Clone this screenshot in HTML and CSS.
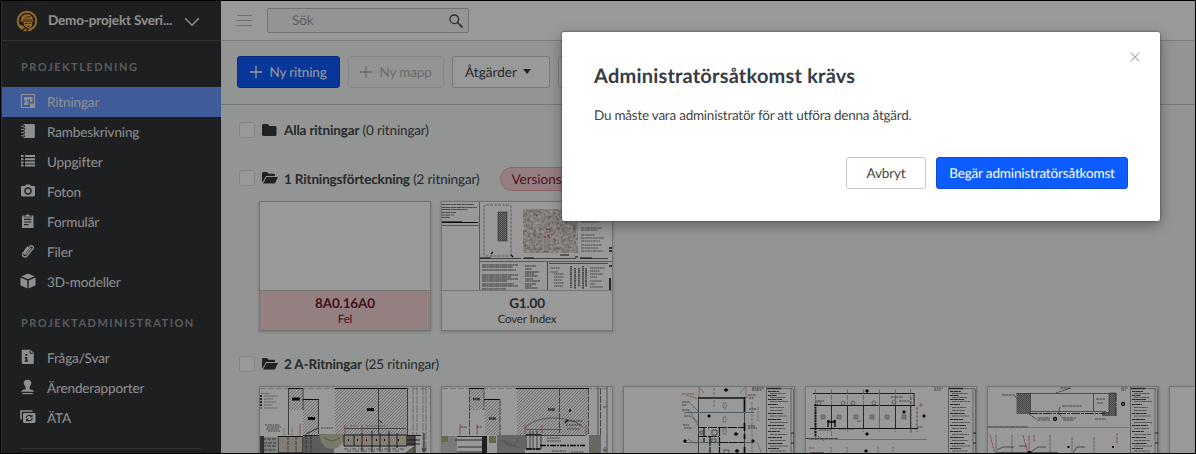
FILE: index.html
```html
<!DOCTYPE html>
<html lang="sv">
<head>
    <meta charset="UTF-8">
    <meta name="viewport" content="width=device-width, initial-scale=1.0">
    <title>Ritningar</title>
    <link rel="stylesheet" href="styles.css">
</head>
<body>
    <!-- Shared patterns and symbols for the drawings -->
    <svg class="defs" width="0" height="0">
        <defs>
            <pattern id="hatch" width="3" height="3" patternUnits="userSpaceOnUse">
                <path d="M-1 1L1 -1M0 3L3 0M2 4L4 2" stroke="#777" stroke-width=".5"/>
            </pattern>
            <pattern id="dense" width="2" height="2" patternUnits="userSpaceOnUse">
                <rect width="2" height="2" fill="#aaa"/><path d="M0 2L2 0" stroke="#555" stroke-width=".6"/>
            </pattern>
            <filter id="mapNoise" x="0" y="0" width="100%" height="100%">
                <feTurbulence type="fractalNoise" baseFrequency=".35" numOctaves="3" seed="4"/>
                <feColorMatrix values="1.2 .3 0 0 -.05  1.1 .3 0 0 -.06  1 .3 .1 0 -.1  0 0 0 0 1"/>
            </filter>
            <symbol id="legend" viewBox="0 0 28 68">
                <path d="M.5 0V68M25 2V68M27.5 2V68" stroke="#777" stroke-width=".7"/>
                <path d="M1 1.5H15" stroke="#111" stroke-width="1.4"/>
                <path d="M1 1.5H27" stroke="#666" stroke-width=".6"/>
                <g stroke="#444" fill="none">
                    <path d="M2 4.5H13M2 8.5H11M2 12.5H16M2 17.5H12M2 26.5H17M2 32.5H15M2 38.5H18M2 44.5H14M2 50.5H16M2 56.5H17M2 61.5H13M2 66.5H17" stroke-width="1.2" stroke-dasharray="3 .4 5 .5 2 .3"/>
                    <path d="M4 6.5H20M4 10.5H19M4 14.5H22M4 20.5H18M4 23.5H17M4 29H21M4 35.5H22M4 41.5H19M4 47.5H21M4 53.5H20M4 59H22M4 64H20" stroke-width="1" stroke-dasharray="4 .5 3 .4" opacity=".6"/>
                </g>
                <path d="M25 46H28M25 56H28" stroke="#333"/>
            </symbol>
        </defs>
    </svg>

    <div class="app">
        <aside class="sidebar">
            <div class="project">
                <svg class="project-logo" viewBox="0 0 22 22">
                    <circle cx="11" cy="11" r="9.300" fill="none" stroke="#fbb03b" stroke-width="2"/>
                    <path d="M5 10C5.200 6.300 7.600 4.300 11 4.300s5.800 2 6 5.700l1.200 1.600H4.200z" fill="#fbb03b"/>
                    <path d="M8.500 7.800L14.500 6.300M7 10H16.500" stroke="#323437" stroke-width=".9"/>
                    <path d="M7.500 12h8.500v3.500l-2 3-3-.500L8 15z" fill="#fbb03b"/>
                    <path d="M9 13.500h2.500M13 13.500h2M11 16.500h2.500" stroke="#323437" stroke-width="1.100"/>
                    <path d="M3.500 14.500l5 2 2 4.800-5-2z" fill="#fbb03b"/>
                    <path d="M5.500 21L9.500 17.500M10.500 22l1.500-3" stroke="#323437" stroke-width="1.300"/>
                </svg>
                <span class="project-name">Demo-projekt Sveri...</span>
                <svg class="project-arrow" viewBox="0 0 16 10"><path d="M1.200 1.200L8 8.200L14.800 1.200" fill="none" stroke="#e8e8e8" stroke-width="1.500"/></svg>
            </div>

            <h2 class="nav-title">PROJEKTLEDNING</h2>
            <ul class="nav">
                <li class="nav-item active">
                    <svg viewBox="0 0 16 16"><path d="M1.500 1.500h13v13h-13z" fill="none" stroke="currentColor" stroke-width="1.200"/><path d="M4 4h8.500v5H10V6.500H7V8h1.500v4H4V9.500h1.500V7.500H4z"/><path d="M10 10.500h4.500v4H10z"/></svg>
                    Ritningar
                </li>
                <li class="nav-item">
                    <svg viewBox="0 0 16 16"><path d="M3.500 1h10c.8 0 1.300.5 1.300 1.300v11.400c0 .8-.5 1.300-1.300 1.300h-10z"/><path d="M1 3.200h4M1 6.400h4M1 9.600h4M1 12.800h4" stroke="#323437" stroke-width="2.300"/><path d="M1 3.200h3.500M1 6.400h3.500M1 9.600h3.500M1 12.800h3.500" stroke="currentColor"/></svg>
                    Rambeskrivning
                </li>
                <li class="nav-item">
                    <svg viewBox="0 0 16 16"><path d="M1 2h2.500v2H1zM1 5.200h2.500v2H1zM1 8.400h2.500v2H1zM1 11.600h2.500v2H1zM5 2h10v2H5zM5 5.200h10v2H5zM5 8.400h10v2H5zM5 11.600h10v2H5z"/></svg>
                    Uppgifter
                </li>
                <li class="nav-item">
                    <svg viewBox="0 0 16 16"><path d="M5 3l1-1.500h4L11 3h2.800c.7 0 1.200.5 1.200 1.200v8.100c0 .7-.5 1.200-1.200 1.200H2.200c-.7 0-1.200-.5-1.200-1.200V4.200C1 3.500 1.500 3 2.200 3z"/><circle cx="8" cy="8" r="3" fill="none" stroke="#323437" stroke-width="1.400"/></svg>
                    Foton
                </li>
                <li class="nav-item">
                    <svg viewBox="0 0 16 16"><path d="M2 2.500h11.500V15H2z"/><path d="M4.200 4V2.200h1.700a2 2 0 0 1 3.700 0h1.700V4z" stroke="#323437" stroke-width=".7"/><path d="M4 6.400h7.500M4 9h7.500M4 11.600h4.500" stroke="#323437" stroke-width="1.100"/></svg>
                    Formulär
                </li>
                <li class="nav-item">
                    <svg viewBox="0 0 16 16"><path d="M10.800 5.400L6.200 10.800c-.9 1-2.300-.1-1.400-1.200l5.200-6.100c1.600-1.900 4.500.2 2.900 2.400l-5.700 6.900c-2.300 2.700-6.200-.1-4-3L7.600 4" fill="none" stroke="currentColor" stroke-width="1.350" stroke-linecap="round"/></svg>
                    Filer
                </li>
                <li class="nav-item">
                    <svg viewBox="0 0 16 16"><path d="M8 .4l6.800 2.800L8 6.200 1.200 3.200zM.5 4.500l6.800 3v8.100L.5 12.300zM15.500 4.500l-6.800 3v8.100l6.800-3.300z"/></svg>
                    3D-modeller
                </li>
            </ul>

            <h2 class="nav-title">PROJEKTADMINISTRATION</h2>
            <ul class="nav">
                <li class="nav-item">
                    <svg viewBox="0 0 16 16"><path d="M3 .8h7.500L13.800 4v9.700c0 .8-.5 1.300-1.300 1.300H3c-.8 0-1.300-.5-1.300-1.300V2.100C1.700 1.300 2.200.8 3 .8z"/><path d="M10 1.500v2.800h3" fill="none" stroke="#323437" stroke-width=".9"/><path d="M5.300 5h2v1.700h-2zM4.800 8h2.500v3.500H8v1.300H4.500v-1.300h1V9.200h-.7z" fill="#323437"/></svg>
                    Fråga/Svar
                </li>
                <li class="nav-item">
                    <svg viewBox="0 0 16 16"><path d="M7.500.7c3 0 4.300 1.900 3.700 4.100C10.800 6.400 9.500 7.500 9.500 10c0 .7 4.500.4 4.500 2.800H1.300C1.300 10.400 5.800 10.700 5.800 10c0-2.500-1.500-3.600-2-5.200C3.300 2.600 4.500.7 7.500.7z"/><path d="M2.300 14h10.500v1.200H2.300z"/></svg>
                    Ärenderapporter
                </li>
                <li class="nav-item">
                    <svg viewBox="0 0 16 16"><path d="M1 10.500V2h11.500" fill="none" stroke="currentColor" stroke-width="1.600"/><rect x="3" y="4" width="12.500" height="10" rx="1.400"/><path d="M6.200 9a3 3 0 0 1 5.200-1.800M12.200 9a3 3 0 0 1-5.200 1.800" fill="none" stroke="#323437" stroke-width="1.100"/><path d="M12.500 5.500v2.800H9.700zM6 12.500V9.700h2.800z" fill="#323437"/></svg>
                    ÄTA
                </li>
            </ul>
            <div class="nav-line"></div>
        </aside>

        <main class="main">
            <header class="topbar">
                <div class="menu-icon"><i></i><i></i><i></i></div>
                <div class="search">
                    <span>Sök</span>
                    <svg viewBox="0 0 16 16"><circle cx="6.300" cy="6.300" r="4.300" fill="none" stroke="#46494d" stroke-width="1.300"/><path d="M9.500 9.500L14.500 14.300" stroke="#46494d" stroke-width="1.700"/></svg>
                </div>
            </header>

            <div class="toolbar">
                <button class="btn primary new-drawing"><svg class="plus" viewBox="0 0 12 12"><path d="M6 0V12M0 6H12"/></svg>Ny ritning</button>
                <button class="btn disabled new-folder"><svg class="plus" viewBox="0 0 12 12"><path d="M6 0V12M0 6H12"/></svg>Ny mapp</button>
                <button class="btn actions">Åtgärder<i class="caret"></i></button>
                <button class="btn more"></button>
            </div>

            <div class="content">
                <div class="folder">
                    <span class="checkbox"></span>
                    <svg class="folder-icon" viewBox="0 0 16 14"><path d="M1.500 1h4.300l1.700 2H13c.9 0 1.500.6 1.500 1.500v7c0 .9-.6 1.500-1.500 1.500H1.500C.6 13 0 12.400 0 11.500v-9C0 1.600.6 1 1.500 1z"/></svg>
                    <span class="folder-name"><b>Alla ritningar</b> (0 ritningar)</span>
                </div>

                <div class="folder first">
                    <span class="checkbox"></span>
                    <svg class="folder-icon" viewBox="0 0 16 14"><path d="M0 11V2.500C0 1.600.6 1 1.500 1H5l1.500 1.700h5c.9 0 1.500.5 1.500 1.400v1H4L.8 10.700z"/><path d="M4.500 6H16l-3.200 6.500H1z"/></svg>
                    <span class="folder-name"><b>1 Ritningsförteckning</b> (2 ritningar)</span>
                    <span class="tag">Versionskonflikt</span>
                </div>
                <div class="cards">
                    <div class="card error">
                        <div class="thumb"></div>
                        <div class="card-text"><b>8A0.16A0</b><span>Fel</span></div>
                    </div>
                    <div class="card">
                        <svg class="thumb" viewBox="0 0 170 88">
                            <path d="M37.500 0V88M0 23.500H37M37 59.500H170" fill="none" stroke="#777" stroke-width=".8"/>
                            <g stroke="#555" stroke-width=".8" stroke-dasharray="3 .4 5 .5 2 .3">
                                <path d="M0 2.500H32M0 5.500H35M0 7.500H25M0 10.500H14M0 13H12M0 15.500H8"/>
                            </g>
                            <path d="M0 20.500H36" stroke="#111"/>
                            <path d="M0 19.500H20" stroke="#333" stroke-width=".7"/>
                            <rect x="42" y="3" width="27" height="51" rx="2" fill="none" stroke="#777" stroke-width=".7" stroke-dasharray="3 1"/>
                            <rect x="56" y="10" width="9" height="29" fill="url(#dense)" stroke="#555" stroke-width=".6"/>
                            <path d="M49 52l2-2M69 53l2 2" stroke="#111" stroke-width="1.300"/>
                            <path d="M38 56.500H79M81 56.500H134M138 56.500H166" stroke="#333" stroke-width=".7"/>
                            <path d="M38 56H49M82 56H92M118 53H127M133 55H136M138 56H150" stroke="#222" stroke-width="1.200"/>
                            <rect x="81" y="7" width="55" height="44" filter="url(#mapNoise)"/>
                            <path d="M81 20L136 14M98 7L107 51M119 7L126 51M81 39L136 43" stroke="#d2cec8" stroke-width="1.500" opacity=".45"/>
                            <path d="M104 28l3-1M108 27v3M105 33l3 3M107 32v2M103 34v2" stroke="#d44" fill="none"/>
                            <g stroke="#666" stroke-width=".8" stroke-dasharray="3 .5 2 .4">
                                <path d="M139 20H157M139 26H160M139 28H156M139 33H153M139 36H162M139 39H158M139 43H160M139 46H156M139 49H161"/>
                            </g>
                            <g stroke="#555" stroke-width=".9" stroke-dasharray="4 .3 2 .3 6 .4">
                                <path d="M40 63H76M40 65H71M40 68H74M40 73H76M40 75H69M40 77H76M40 79H65M40 82H72M40 84H76M40 87H64"/>
                                <path d="M83 64H94M83 67H90M83 70H97M83 72H92M83 74H96M83 77H91M83 79H98M83 82H94M83 84H90M83 86H96"/>
                            </g>
                            <path d="M105.500 60V88M107 61.500H166" stroke="#555" stroke-width=".8"/>
                            <g stroke="#666" stroke-width=".9" stroke-dasharray="1.500 .4">
                                <path d="M108 66H118M108 70H116M112 72H122M112 75H122M112 78H120M112 81H122M112 84H121"/>
                                <path d="M129 64V86M133 66V87M137 66V85M141 64V87M144 66V85" stroke-width="2" opacity=".8"/>
                                <path d="M148 66H163M148 69H158M148 72H161M148 75H155M148 79H160M148 82H153M148 85H161"/>
                            </g>
                            <path d="M167 46H170M167 49H170M167 64H170M168 76V88" stroke="#222" stroke-width="1.700"/>
                        </svg>
                        <div class="card-text"><b>G1.00</b><span>Cover Index</span></div>
                    </div>
                </div>

                <div class="folder second">
                    <span class="checkbox"></span>
                    <svg class="folder-icon" viewBox="0 0 16 14"><path d="M0 11V2.500C0 1.600.6 1 1.500 1H5l1.500 1.700h5c.9 0 1.500.5 1.500 1.400v1H4L.8 10.700z"/><path d="M4.500 6H16l-3.200 6.500H1z"/></svg>
                    <span class="folder-name"><b>2 A-Ritningar</b> (25 ritningar)</span>
                </div>
                <div class="cards">
                    <div class="card">
                        <svg class="thumb" viewBox="0 0 170 88">
                            <path d="M0 1.500H170" stroke="#999" stroke-width=".6" stroke-dasharray="6 2"/>
                            <path d="M29 1h14v22H29zM43 12.500h16V48H43zM75 1.500h72V48H75z" fill="url(#hatch)"/>
                            <path d="M28.500 48V1.500H43V23M43 12.500H58.500V47M147.500 1V48M118.500 1V47" fill="none" stroke="#444" stroke-width=".8"/>
                            <path d="M28 1.500H43M43 12.500H59M75 1.500H147" stroke="#111" stroke-width="1.200"/>
                            <path d="M32 12h8M48 31.500h7M107 22.500h7" stroke="#000" stroke-width="3"/>
                            <path d="M1 6.500H9M4 9H18M4 12H13M4 15H16M4 18H12M4 21H17" stroke="#888" stroke-width=".8" stroke-dasharray="3 .5"/>
                            <path d="M1 8v2M1 11v2M1 14v2M1 17v2" stroke="#445" stroke-width="2"/><path d="M1 20v2" stroke="#aa8" stroke-width="2"/>
                            <path d="M5 38H20M7 40H21M6 42H19M8 44H20M61 41H73" stroke="#555" stroke-width=".8" stroke-dasharray="2 .5"/>
                            <path d="M18 66V49.500H43V66z" fill="#d8d0c2" stroke="#222"/>
                            <path d="M44 48h30v20H44z" fill="#9a9a9a"/>
                            <path d="M0 50h18v18H0z" fill="#cfd2cf"/><path d="M0 49h4v19H0z" fill="#555"/>
                            <path d="M2 52H17M3 56H16M2 59H17M3 63H15M28 49V66M36 49V66M46 48V68M51 48V66" stroke="#444" stroke-width=".8" stroke-dasharray="4 1"/>
                            <path d="M43 48.500H60M46 47l12-6" stroke="#333" stroke-width=".9"/>
                            <path d="M59 47h25c1 8-4 15-12 15S60 55 59 47z" fill="#c5ceac"/>
                            <path d="M64 51l8 3 8-3" stroke="#777" stroke-width=".7" fill="none"/>
                            <path d="M84 48h63v11H84z" fill="#ddd5c9" stroke="#222"/>
                            <path d="M147 48h8v11h-8z" fill="#777"/>
                            <path d="M88 53h1M97 53h1M106 53h1M116 53h1M124 53h1M138 53h1" stroke="#111" stroke-width="2"/>
                            <path d="M94 48V59M102 46V65M112 44V65M120 46V64M129 44V65M137 46V61M147 48.500H161M147 53H160M147 57H160M155 48V68" stroke="#222" stroke-width=".9"/>
                            <path d="M84 41.500H146" stroke="#444" stroke-width=".7"/>
                            <path d="M40 49V37M85 47V38M102 46V38M102 48V60" stroke="#d66" stroke-width=".8"/>
                            <path d="M24 48V40M32 48V40M106 39H128M90 39H98" stroke="#999" stroke-width=".8" stroke-dasharray="2 .6"/>
                            <path d="M84 62H145M87 64H140" stroke="#666" stroke-width=".8" stroke-dasharray="4 2 1 1"/>
                            <path d="M153 0V48M157 0V48M163 0V68M166 0V68" stroke="#888" stroke-width=".6" stroke-dasharray="8 1"/>
                            <path d="M119 33l3 3M164 46v18m-2-3l2 4 2-4" stroke="#222" stroke-width=".9" fill="none"/>
                            <path d="M146 66l8-6v8h-8z" fill="#aab18b" stroke="#333" stroke-width=".7"/>
                        </svg>
                        <div class="card-text"></div>
                    </div>
                    <div class="card">
                        <svg class="thumb" viewBox="0 0 170 88">
                            <path d="M0 1.500H165" stroke="#999" stroke-width=".6" stroke-dasharray="6 2"/>
                            <path d="M28 1h14v22H28zM43 12.500h15V48H43zM75 1.500h71V48H75z" fill="url(#hatch)"/>
                            <path d="M27.500 48V1.500H42V23M42 12.500H58V48M146.500 1V47M117.500 2V46M158.500 1V68" fill="none" stroke="#555" stroke-width=".8" stroke-dasharray="7 1"/>
                            <path d="M27 1.500H42M42 12.500H58M74 1.500H147" stroke="#111" stroke-width="1.200"/>
                            <path d="M31 12h7M47 31.500h7M106 22.500h7" stroke="#444" stroke-width="2.500" stroke-dasharray="1 .3"/>
                            <path d="M55 48H83V67H55zM147 48h12v20h-12z" fill="#aaa"/><path d="M0 49H15V68H0z" fill="#ccc"/>
                            <path d="M40 49h5v19h-5z" fill="#333"/><path d="M0 49h6v6H0zM47 49h7v7h-7zM150 59h4v9h-4z" fill="#a5b07e"/>
                            <path d="M62 52a7 7 0 0 0 14 0M58 53l20 8" stroke="#777" fill="none" stroke-width=".6"/>
                            <path d="M15 49.500H40M13 53H40M16 60H40M15 65H40M84 47.500H99V62H84z" stroke="#333" stroke-width=".9" fill="none"/>
                            <path d="M88 44V62M91 44V62M95 44V62M83 48.500H143" stroke="#444" stroke-width=".8"/>
                            <path d="M98 58.500H143M84 62H98" stroke="#111" stroke-width="1.700" stroke-dasharray="6 1 2 1"/>
                            <path d="M83 41c7-8 20-10 28-10s25 2 30 10M84 42.500H120" fill="none" stroke="#666" stroke-width=".7"/>
                            <path d="M123 34H141M124 38H140M125 42H138M105 51H118M105 54H119M110 64H124M129 65H142M19 40H25M35 40H40" stroke="#444" stroke-width=".8" stroke-dasharray="2 .6"/>
                            <path d="M128 22v3M123 36l3-3" stroke="#111" stroke-width="1.500"/>
                            <path d="M18 48V37M35 48V37M83 47V38M100 46V38M144 38V49" stroke="#d66" stroke-width=".8"/>
                            <path d="M165 0V68M156 0V48M161 20h3M163 60v4m-2-2l2 3 2-3" stroke="#666" stroke-width=".8" fill="none"/>
                        </svg>
                        <div class="card-text"></div>
                    </div>
                    <div class="card">
                        <svg class="thumb" viewBox="0 0 170 88">
                            <path d="M74.500 10V68M120.500 10V68" fill="none" stroke="#555" stroke-width=".9"/>
                            <path d="M74 11H121" stroke="#222" stroke-width="1.500"/>
                            <path d="M60 25.500H130M60 55.500H130" stroke="#78949e" stroke-width=".9"/>
                            <path d="M74 40.500H120M80 41V55M95.500 40V68M74 49.500H95M86 50V68M95 55.500H120" fill="none" stroke="#222" stroke-width="1.200" stroke-dasharray="9 1"/>
                            <path d="M120.500 10V25M120.500 36V44M120.500 47V52M120.500 60V68" stroke="#111" stroke-width="1.700"/>
                            <path d="M75 10V0M122 10V0M62 8l13 4M66 24l8 15M64 52l9 5" stroke="#d88" stroke-width=".7"/>
                            <path d="M75 0l5 6M121 0l-5 6" stroke="#8ab" stroke-width=".7"/>
                            <path d="M58 7H70" stroke="#c66" stroke-width=".8" stroke-dasharray="2 .6"/>
                            <path d="M58 15H66M58 18H63M58 23H66M60 29H66M59 38H65M60 41H68M124 8H132M125 11H130M125 22H132M124 39H131M124 41H133M128 1H140M128 3H138" stroke="#555" stroke-width=".9" stroke-dasharray="2 .5"/>
                            <path d="M66 16l8 8M66 29l8 6M124 9l-4 4" stroke="#777" stroke-width=".6"/>
                            <path d="M99 16h3v5h-3zM99 30h3v5h-3zM99 42h3v5h-3z" fill="none" stroke="#777" stroke-width=".8" stroke-dasharray="1 .6"/>
                            <path d="M102 1l2.500 2-2.500 2-2.500-2zM85 27l2 2-2 2-2-2zM112 45l2.500 2-2.500 2-2.500-2zM113 62l2.500 2-2.500 2-2.500-2zM61 52l2 2-2 2-2-2zM129 52l2 2-2 2-2-2z" fill="#111"/>
                            <path d="M90 1V20M128 15V68M134 20V34" stroke="#888" stroke-width=".6" stroke-dasharray="3 1"/>
                            <path d="M76 44h3v3h-3zM88 43h5v5h-5zM87 52h5v3h-5zM100 63h5v4h-5z" fill="none" stroke="#666" stroke-width=".8"/>
                            <path d="M133 55l5 12" stroke="#d66" stroke-width=".8" stroke-dasharray="2 1"/>
                            <use href="#legend" x="142" y="0" width="28" height="68"/>
                        </svg>
                        <div class="card-text"></div>
                    </div>
                    <div class="card">
                        <svg class="thumb" viewBox="0 0 170 88">
                            <path d="M7 6.500H108V18" fill="none" stroke="#333" stroke-width="1"/>
                            <path d="M9.500 2V53M25.500 2V50M41.500 2V45M57.500 2V45M73.500 2V45M89.500 2V45M104.500 2V46" stroke="#888" stroke-width=".6" stroke-dasharray="5 1"/>
                            <path d="M8 18.500H109M4 41.500H112" stroke="#222" stroke-width="1.200"/>
                            <path d="M25.500 18V41M41.500 18V41M57.500 18V41M89.500 18V41M104.500 18V41" stroke="#333" stroke-width=".9"/>
                            <path d="M73.500 6V41" stroke="#8ab" stroke-width=".8"/>
                            <path d="M9.500 17V50" stroke="#222" stroke-width="2" stroke-dasharray="2 .7"/>
                            <path d="M105 10V45M111 20V45" stroke="#977" stroke-width=".9" stroke-dasharray="3 1"/>
                            <path d="M15 28h4v4h-4zM31 28h4v4h-4zM48 28h4v4h-4zM64 28h4v4h-4zM79 28h4v4h-4zM96 28h4v4h-4z" fill="#ccc" stroke="#888" stroke-width=".6"/>
                            <path d="M22 40v-5h7v5M21 34h3M27 34h3" stroke="#111" fill="none" stroke-width="1.300"/>
                            <g fill="none" stroke="#777" stroke-width=".7"><circle cx="13" cy="16" r="2"/><circle cx="37" cy="16" r="2"/><circle cx="47" cy="16" r="2"/><circle cx="68" cy="16" r="2"/><circle cx="88" cy="15" r="2"/><circle cx="115" cy="18" r="1.200" stroke="#c55"/></g>
                            <path d="M61 2l2 2-2 2-2-2zM98 23l2 2-2 2-2-2zM118 27l2 2-2 2-2-2zM61 45l2 2-2 2-2-2zM60 62l2 2-2 2-2-2z" fill="#111"/>
                            <path d="M12 49l6 5M13 43H25M33 42H48M9 14H18M85 10H97M111 40H117M93 14H104M51 34H55M128 1H137M128 3H135" stroke="#555" stroke-width=".8" stroke-dasharray="2 .6"/>
                            <path d="M0 51.500H32" stroke="#555" stroke-width=".9" stroke-dasharray="4 .6"/><path d="M3 52.500H121" stroke="#888" stroke-width=".6"/>
                            <path d="M25 60V68M41 60V68M72 60V68M87 60V68" stroke="#6a929d" stroke-width=".8" stroke-dasharray="2 1"/>
                            <path d="M3 61H9" stroke="#c66" stroke-width=".8" stroke-dasharray="2 1"/><path d="M4 66H18" stroke="#333" stroke-width=".9"/>
                            <use href="#legend" x="142" y="0" width="28" height="68"/>
                        </svg>
                        <div class="card-text"></div>
                    </div>
                    <div class="card">
                        <svg class="thumb" viewBox="0 0 170 88">
                            <path d="M28.500 6h14v21h-14zM121 5.500h7V29h-14v-4h7z" fill="url(#dense)"/>
                            <path d="M28 6.500H128M42.500 6V25M42 24.500H118M105.500 6V24M121 6V28" fill="none" stroke="#666" stroke-width=".8"/>
                            <path d="M41 26.500H117M128 6V30" stroke="#333" stroke-width=".9" stroke-dasharray="9 1 3 1"/>
                            <path d="M14 8H26M26 8l3 4M72 1H83L68 6M108 12H117M109 16H115M74 19H94M72 20L70 27M49 33H62M50 31H62M75 31H88M75 33H86M107 32H118M41 27l7 5M71 27l4 4M133 1H140M133 3H138" stroke="#555" stroke-width=".8" fill="none" stroke-dasharray="3 .5"/>
                            <g fill="none" stroke="#111" stroke-width="1.300"><circle cx="67" cy="32" r="1.500"/><circle cx="135" cy="17" r="1.500"/></g>
                            <path d="M0 40H40" stroke="#444" stroke-width=".9" stroke-dasharray="5 .5"/><path d="M3 40.500H141" stroke="#aaa" stroke-width=".6"/>
                            <g fill="none" stroke-width=".8" stroke-dasharray="3 .7"><path d="M2 48L7 67M35 48L40 67M41 48V67M46 48V55M129 46V57" stroke="#d66"/><path d="M8 48V67M24 48V67" stroke="#6a929d"/><path d="M62 48V67M84 50V67M106 50V67" stroke="#888"/></g>
                            <path d="M9 63L15 60H26M31 59H39M43 65L50 60H58M85 66L89 60H97M8 65.500H70" stroke="#555" stroke-width=".8" fill="none"/>
                            <path d="M79.500 60h2M124 60h2M40 65h3" stroke="#111" stroke-width="2"/>
                            <use href="#legend" x="142" y="0" width="28" height="68"/>
                        </svg>
                        <div class="card-text"></div>
                    </div>
                    <div class="card">
                        <div class="thumb"></div>
                        <div class="card-text"></div>
                    </div>
                </div>
            </div>
        </main>

        <div class="overlay">
            <div class="modal">
                <svg class="close" viewBox="0 0 10 10"><path d="M.7.7L9.300 9.300M9.300.7L.7 9.300" stroke="#aaa" stroke-width="1.100"/></svg>
                <h1>Administratörsåtkomst krävs</h1>
                <p>Du måste vara administratör för att utföra denna åtgärd.</p>
                <div class="modal-buttons">
                    <button class="btn cancel">Avbryt</button>
                    <button class="btn primary request">Begär administratörsåtkomst</button>
                </div>
            </div>
        </div>
    </div>
</body>
</html>
```

FILE: styles.css
```css
* {
    box-sizing: border-box;
}
body {
    margin: 0;
    font-family: Lato, 'Liberation Sans', sans-serif;
    font-size: 13.5px;
    letter-spacing: -0.15px;
    color: #434547;
    text-rendering: geometricPrecision;
    overflow: hidden;
}
.defs {
    position: absolute;
}
.app {
    position: relative;
    display: flex;
    height: 454px;
    border: 1px solid #000;
    overflow: hidden;
}
/* Sidebar */
.sidebar {
    width: 220px;
    flex-shrink: 0;
    background: #323437;
    border-left: 1px solid #505255;
    color: #eee;
}
.project {
    display: flex;
    align-items: center;
    height: 40px;
    padding-left: 14px;
    border-bottom: 1px solid #54565a;
}
.project-logo {
    width: 22px;
    height: 22px;
}
.project-name {
    width: 126px;
    margin: -2px 0 0 10px;
    font-weight: bold;
    white-space: nowrap;
}
.project-arrow {
    width: 16px;
    height: 10px;
    margin: 3px 0 0 10px;
}
.nav-title {
    margin: 0;
    height: 46px;
    padding-left: 19px;
    font-size: 11px;
    line-height: 53px;
    letter-spacing: 1.52px;
    color: #97989b;
}
.nav {
    margin: 0;
    padding: 0;
    list-style: none;
}
.nav-item {
    display: flex;
    align-items: center;
    gap: 11px;
    height: 30px;
    padding-left: 18px;
    letter-spacing: -0.13px;
}
.nav-item svg {
    width: 16px;
    height: 16px;
    margin-top: -2px;
    fill: currentColor;
}
.nav-item.active {
    background: #6998ff;
}
.nav-line {
    margin: 15px 20px 0 19px;
    border-top: 1px solid #505255;
}
/* Main */
.main {
    flex: 1;
    min-width: 0;
    background: #f4f8f7;
}
.topbar {
    display: flex;
    align-items: center;
    height: 40px;
    padding-left: 16px;
    background: #fff;
    border-bottom: 1px solid #cccdd0;
}
.menu-icon {
    display: flex;
    flex-direction: column;
    gap: 4px;
    width: 15px;
}
.menu-icon i {
    height: 1px;
    background: #b9bcbd;
}
.search {
    display: flex;
    align-items: center;
    justify-content: space-between;
    width: 202px;
    height: 25px;
    margin-left: 15px;
    padding: 0 4px 0 24px;
    background: #f4f8f7;
    border: 1px solid #bbbec1;
    border-radius: 2px;
    color: #999b9d;
}
.search span {
    margin-top: -1px;
}
.search svg {
    width: 16px;
    height: 16px;
}
.toolbar {
    display: flex;
    gap: 8px;
    height: 64px;
    padding: 15px 0 0 16px;
    border-bottom: 1px solid #c7c9cc;
}
.btn {
    display: flex;
    align-items: center;
    justify-content: center;
    flex-shrink: 0;
    height: 32px;
    padding: 0 0 1px;
    border: 1px solid #c6c8ce;
    border-radius: 3px;
    background: #fff;
    color: #434547;
    font-family: inherit;
    font-size: inherit;
    letter-spacing: inherit;
    text-rendering: inherit;
}
.btn.primary {
    background: #0d5cff;
    border-color: #0b4cd4;
    color: #fff;
}
.btn.disabled {
    background: transparent;
    border-color: #dfe2e2;
    color: #b1b4b4;
}
.plus {
    width: 12px;
    height: 12px;
    margin-right: 7px;
    stroke: currentColor;
    stroke-width: 1.3;
}
.new-drawing {
    width: 103px;
}
.new-folder {
    width: 96px;
}
.actions {
    width: 98px;
    padding-right: 6px;
    letter-spacing: 0.05px;
}
.more {
    width: 90px;
}
.caret {
    margin-left: 6px;
    border: 4.5px solid transparent;
    border-top: 5px solid #38393b;
    border-bottom: 0;
}
.content {
    padding: 13px 0 0 18px;
}
.folder {
    display: flex;
    align-items: center;
    height: 24px;
    padding-top: 1px;
}
.folder.first {
    margin: 24px 0 11px;
}
.folder.second {
    margin: 21px 0 10px;
}
.checkbox {
    width: 16px;
    height: 16px;
    margin-top: -2px;
    background: #fff;
    border: 1px solid #dfdfdf;
    border-radius: 3px;
}
.folder-icon {
    width: 16px;
    height: 14px;
    margin: -1px 6px 0 7px;
    fill: #38393b;
}
.folder-name {
    margin-top: -2px;
    white-space: nowrap;
}
.folder.first .folder-name {
    margin-top: 0;
}
.tag {
    height: 24px;
    margin-left: 21px;
    padding: 0 10px;
    border: 1px solid #f2a3ad;
    border-radius: 12px;
    background: #f9d3d7;
    color: #841b2c;
    letter-spacing: 0;
    line-height: 22px;
}
.cards {
    display: flex;
    gap: 10px;
    padding-left: 20px;
}
.card {
    width: 172px;
    flex-shrink: 0;
    height: 130px;
    background: #fff;
    border: 1px solid #bfc1c1;
    box-shadow: 0 1px 3px rgba(0, 0, 0, 0.2);
}
.thumb {
    display: block;
    width: 170px;
    height: 88px;
}
.card-text {
    display: flex;
    flex-direction: column;
    align-items: center;
    height: 40px;
    padding-top: 4px;
    border-top: 1px solid #c4c6c6;
    line-height: 17px;
}
.card-text span {
    font-size: 11.5px;
    line-height: 15px;
}
.error .card-text {
    background: #f8d5d8;
    color: #741827;
}
/* Modal */
.overlay {
    position: absolute;
    inset: 0;
    background: rgba(0, 0, 0, 0.4);
}
.modal {
    position: absolute;
    top: 31px;
    left: 561px;
    width: 598px;
    height: 189px;
    padding: 32px;
    background: #fff;
    border-radius: 2px;
    box-shadow: 0 0 2px rgba(0, 0, 0, 0.6), 0 4px 14px rgba(0, 0, 0, 0.35);
}
.close {
    position: absolute;
    top: 20px;
    right: 20px;
    width: 10px;
    height: 10px;
}
.modal h1 {
    margin: 0;
    font-size: 20px;
    line-height: 24px;
    letter-spacing: 0.2px;
    color: #363b44;
}
.modal p {
    margin: 18px 0 0;
    line-height: 18px;
    letter-spacing: -0.23px;
}
.modal-buttons {
    display: flex;
    justify-content: flex-end;
    gap: 10px;
    margin-top: 33px;
}
.cancel {
    width: 80px;
}
.request {
    width: 192px;
}
```
